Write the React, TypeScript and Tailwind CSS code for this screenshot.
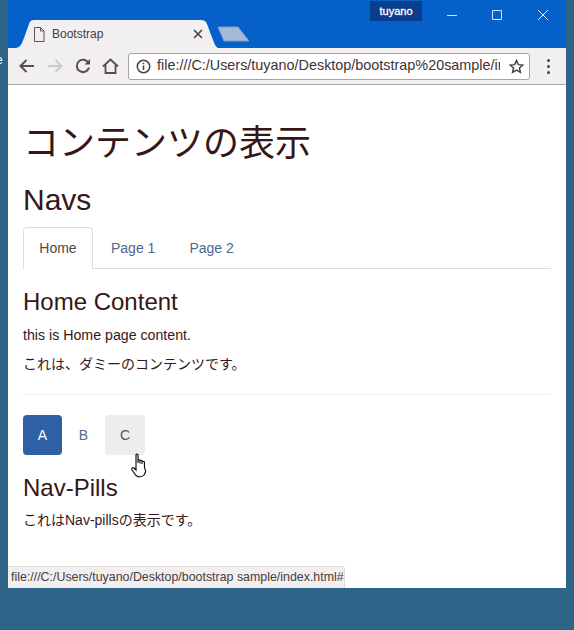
import React from 'react';

const fontStack = "font-['Liberation_Sans','Noto_Sans_CJK_JP',sans-serif]";

function BrowserBar() {
  return (
    <>
      {/* Title strip */}
      <div className="h-12 bg-[#0560c9] relative flex items-end pl-2 shrink-0">
        <div className="relative w-[202px] h-[28px] flex items-center pl-[17px] pr-[15px]">
          <svg className="absolute inset-0" width="202" height="28" viewBox="0 0 202 28">
            <path d="M0 28 C5 27 6 23 8 18 L13 4 C14 1 15 0 18 0 L185 0 C188 0 190 1 191 4 L197 20 C199 25 200 27 202 28 Z" fill="#f1efef" />
          </svg>
          <svg className="relative" width="12" height="15" viewBox="0 0 12 15" fill="none" stroke="#5a5050" strokeWidth="1">
            <path d="M1.5 .5 H7.5 L11 4 V14.5 H1.5 Z M7.5 .5 V4 H11" />
          </svg>
          <span className="relative ml-[7px] text-xs text-[#4a3c3c] flex-1">Bootstrap</span>
          <svg className="relative" width="10" height="10" viewBox="0 0 10 10" stroke="#4a4242" strokeWidth="1.6">
            <path d="M1 1 L9 9 M9 1 L1 9" />
          </svg>
        </div>
        <svg className="mb-[6px] -ml-[1px]" width="34" height="16" viewBox="0 0 34 16">
          <path d="M1 1 H21 L32 15 H7 Z" fill="#a4b8d8" stroke="#7f9cc8" strokeWidth="1" />
        </svg>

        {/* User badge and window buttons */}
        <div className="absolute top-0 right-0 h-7 flex items-start">
          <div className="mt-px w-[52px] h-5 bg-[#0a3d8c] text-white text-[11px] leading-5 text-center [-webkit-text-stroke:0.3px_white]">tuyano</div>
          <div className="ml-[25px] mt-[10px] flex items-center pr-[18px]">
            <svg width="10" height="10" viewBox="0 0 10 10" stroke="#cfe6ff" strokeWidth="1"><path d="M0 5.5 H10" /></svg>
            <svg className="ml-[35px]" width="10" height="10" viewBox="0 0 10 10" fill="none" stroke="#cfe6ff" strokeWidth="1"><path d="M.5 .5 H9.5 V9.5 H.5 Z" /></svg>
            <svg className="ml-9" width="10" height="10" viewBox="0 0 10 10" stroke="#dcefff" strokeWidth="1"><path d="M0 0 L10 10 M10 0 L0 10" /></svg>
          </div>
        </div>
      </div>

      {/* Toolbar */}
      <div className="h-[37px] bg-[#f1efef] border-b border-[#a8a2a2] flex items-center pl-[11px] shrink-0">
        <svg width="16" height="14" viewBox="0 0 16 14" fill="none" stroke="#5a4d4d" strokeWidth="2">
          <path d="M15 7 H2 M7.5 1 L1.5 7 L7.5 13" />
        </svg>
        <svg className="ml-[12px]" width="16" height="14" viewBox="0 0 16 14" fill="none" stroke="#cfcaca" strokeWidth="2">
          <path d="M1 7 H14 M8.5 1 L14.5 7 L8.5 13" />
        </svg>
        <svg className="ml-[12px]" width="16" height="16" viewBox="0 0 16 16" fill="none" stroke="#5a4d4d" strokeWidth="2">
          <path d="M13.5 5 A6.2 6.2 0 1 0 14 9.5" />
          <path d="M15 1 V6.5 H9.5 Z" fill="#5a4d4d" stroke="none" />
        </svg>
        <svg className="ml-[11px]" width="17" height="16" viewBox="0 0 17 16" fill="none" stroke="#5a4d4d" strokeWidth="1.8">
          <path d="M1 8.5 L8.5 1.5 L16 8.5 M3.5 7 V15 H13.5 V7" />
        </svg>
        <div className="ml-[9px] w-[402px] h-[27px] bg-white border border-[#a8a2a2] rounded-[3px] flex items-center pl-[7px] pr-[5px]">
          <svg width="15" height="15" viewBox="0 0 15 15" fill="none" stroke="#4a4242" strokeWidth="1.5">
            <circle cx="7.5" cy="7.5" r="6.2" />
            <path d="M7.5 6.5 V11 M7.5 3.8 V5.2" />
          </svg>
          <span className="ml-[6px] w-[343px] overflow-hidden whitespace-nowrap text-[14.4px] text-[#3f3434]">
            file:///C:/Users/tuyano/Desktop/bootstrap%20sample/index.html
          </span>
          <svg className="ml-auto" width="15" height="15" viewBox="0 0 24 24" fill="none" stroke="#4a4242" strokeWidth="2.4">
            <path d="M12 2.5 L14.9 9 L22 9.7 L16.7 14.4 L18.2 21.4 L12 17.8 L5.8 21.4 L7.3 14.4 L2 9.7 L9.1 9 Z" />
          </svg>
        </div>
        <div className="ml-[17px] flex flex-col gap-[3px]">
          <span className="w-[3px] h-[3px] rounded-full bg-[#4a4242]" />
          <span className="w-[3px] h-[3px] rounded-full bg-[#4a4242]" />
          <span className="w-[3px] h-[3px] rounded-full bg-[#4a4242]" />
        </div>
      </div>
    </>
  );
}

function HandCursor() {
  return (
    <svg className="absolute left-[122px] top-[453px]" width="18" height="25" viewBox="0 0 16 25" fill="#fff" stroke="#1c1414" strokeWidth="1.2">
      <path d="M5 2 C5 .8 7 .8 7 2 V10 V7.5 C7 6.5 9 6.5 9 7.5 V10.5 V8 C9 7 11 7 11 8 V11 V9 C11 8 13.5 8 13.5 9.5 V15 C15 17 14.5 20 13 22 C11.5 24 7 24.5 5 22.5 L1 17 C.2 15.5 1.5 14 3 15 L5 17 Z" />
    </svg>
  );
}

export default function App() {
  return (
    <div className={`w-[574px] h-[630px] bg-[#2d6488] pl-2 overflow-hidden relative ${fontStack}`}>
      <span className="absolute -left-1 top-[52px] text-xs text-white">e</span>
      <div className="relative w-[558px] h-[588px] bg-white flex flex-col overflow-hidden">
        <BrowserBar />

        <div className="px-[15px] pt-[37px] text-[#361616] text-sm">
          <h1 className="text-4xl leading-[44px]">コンテンツの表示</h1>
          <h2 className="mt-4 text-[30px] leading-9">Navs</h2>

          {/* Tabs */}
          <div className="mt-[9px] flex border-b border-[#dcdcdc] h-[42px] w-[528px]">
            <div className="w-[70px] h-[42px] pb-[2px] bg-white border border-b-0 border-[#dcdcdc] rounded-t-[4px] flex items-center justify-center text-[#554545]">Home</div>
            <div className="ml-[18px] h-[41px] flex items-center text-[#4a6890]">Page 1</div>
            <div className="ml-[34px] h-[41px] flex items-center text-[#4a6890]">Page 2</div>
          </div>

          <h3 className="mt-[18px] text-2xl leading-[29px]">Home Content</h3>
          <p className="mt-[9px] leading-5 text-[14.2px]">this is Home page content.</p>
          <p className="mt-[9px] leading-5">これは、ダミーのコンテンツです。</p>
          <hr className="mt-5 w-[528px] border-[#eeeeee]" />

          {/* Pills */}
          <div className="mt-5 flex h-10">
            <div className="w-[39px] rounded-[4px] bg-[#2f5fa5] text-white flex items-center justify-center">A</div>
            <div className="w-[43px] text-[#4f6a90] flex items-center justify-center">B</div>
            <div className="w-10 rounded-[4px] bg-[#eeecec] text-[#4f5568] flex items-center justify-center">C</div>
          </div>

          <h3 className="mt-[18px] text-2xl leading-[29px]">Nav-Pills</h3>
          <p className="mt-[8px] leading-5">これはNav-pillsの表示です。</p>
        </div>

        <HandCursor />

        {/* Link status bubble */}
        <div className="absolute left-0 bottom-0 w-[337px] h-[22px] bg-[#f1efef] border-t border-r border-[#e0dcdc] rounded-tr-[3px] pl-[3px] text-[12.4px] leading-[21px] text-[#4a3c3c] whitespace-nowrap">
          file:///C:/Users/tuyano/Desktop/bootstrap sample/index.html#
        </div>
      </div>
    </div>
  );
}
